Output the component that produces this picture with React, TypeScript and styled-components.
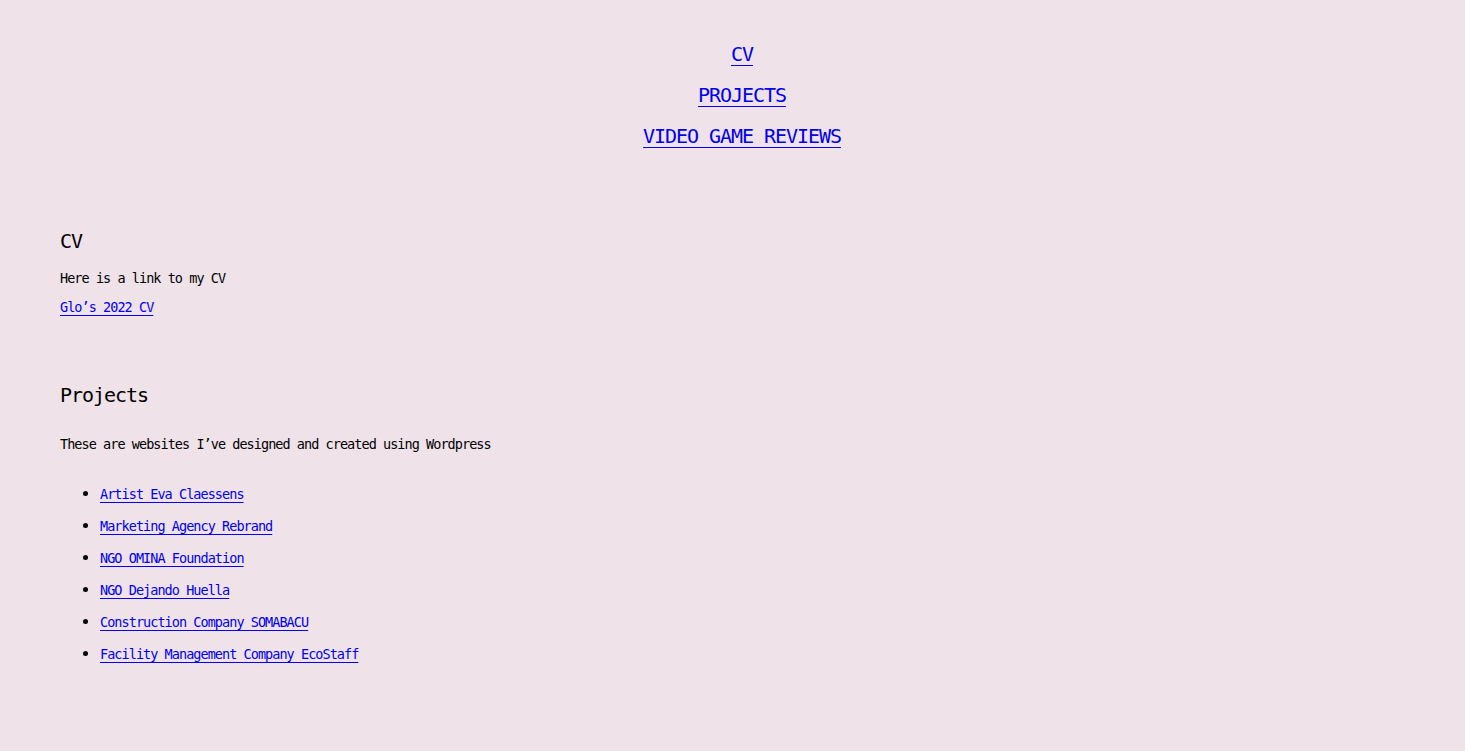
import React from "react";
import styled, { createGlobalStyle } from "styled-components";

const Global = createGlobalStyle`
  html, body { margin: 0; padding: 0; background: #efe2e9; }
  body { font-family: "DejaVu Sans Mono", "Liberation Mono", monospace; color: #000; }
`;

const Page = styled.div`
  min-height: 751px;
  background: #efe2e9;
  padding: 34px 60px 40px;
  box-sizing: border-box;
`;

const Nav = styled.nav`
  display: flex;
  flex-direction: column;
  align-items: center;
  padding-left: 19px;
`;

const NavLink = styled.a`
  font-size: 20px;
  line-height: 41px;
  letter-spacing: -1.05px;
  color: #0000ee;
  text-decoration: underline;
  text-decoration-thickness: 1px;
  text-underline-offset: 4px;
`;

const Section = styled.section<{ $top: number }>`
  margin-top: ${(p) => p.$top}px;
`;

const Heading = styled.h2`
  margin: 0;
  font-size: 20px;
  font-weight: normal;
  line-height: 24px;
  letter-spacing: -1.05px;
`;

const Text = styled.p<{ $top: number }>`
  margin: ${(p) => p.$top}px 0 0;
  font-size: 13.5px;
  line-height: 20px;
  letter-spacing: -0.95px;
`;

const Link = styled.a`
  color: #0000ee;
  text-decoration: underline;
  text-decoration-thickness: 1px;
  text-underline-offset: 3px;
`;

const List = styled.ul`
  margin: 30px 0 0;
  padding-left: 40px;
  display: flex;
  flex-direction: column;
  gap: 12px;
`;

const Item = styled.li`
  height: 20px;
  font-size: 13.5px;
  line-height: 20px;
  letter-spacing: -0.95px;

  &::marker {
    font-size: 16px;
  }
`;

const projects = [
  "Artist Eva Claessens",
  "Marketing Agency Rebrand",
  "NGO OMINA Foundation",
  "NGO Dejando Huella",
  "Construction Company SOMABACU",
  "Facility Management Company EcoStaff",
];

export default function App() {
  return (
    <Page>
      <Global />
      <Nav>
        <NavLink href="#cv">CV</NavLink>
        <NavLink href="#projects">PROJECTS</NavLink>
        <NavLink href="#reviews">VIDEO GAME REVIEWS</NavLink>
      </Nav>
      <Section $top={72}>
        <Heading>CV</Heading>
        <Text $top={15}>Here is a link to my CV</Text>
        <Text $top={9}>
          <Link href="#cv">Glo’s 2022 CV</Link>
        </Text>
      </Section>
      <Section $top={66}>
        <Heading>Projects</Heading>
        <Text $top={27}>These are websites I’ve designed and created using Wordpress</Text>
        <List>
          {projects.map((p) => (
            <Item key={p}>
              <Link href="#">{p}</Link>
            </Item>
          ))}
        </List>
      </Section>
    </Page>
  );
}
